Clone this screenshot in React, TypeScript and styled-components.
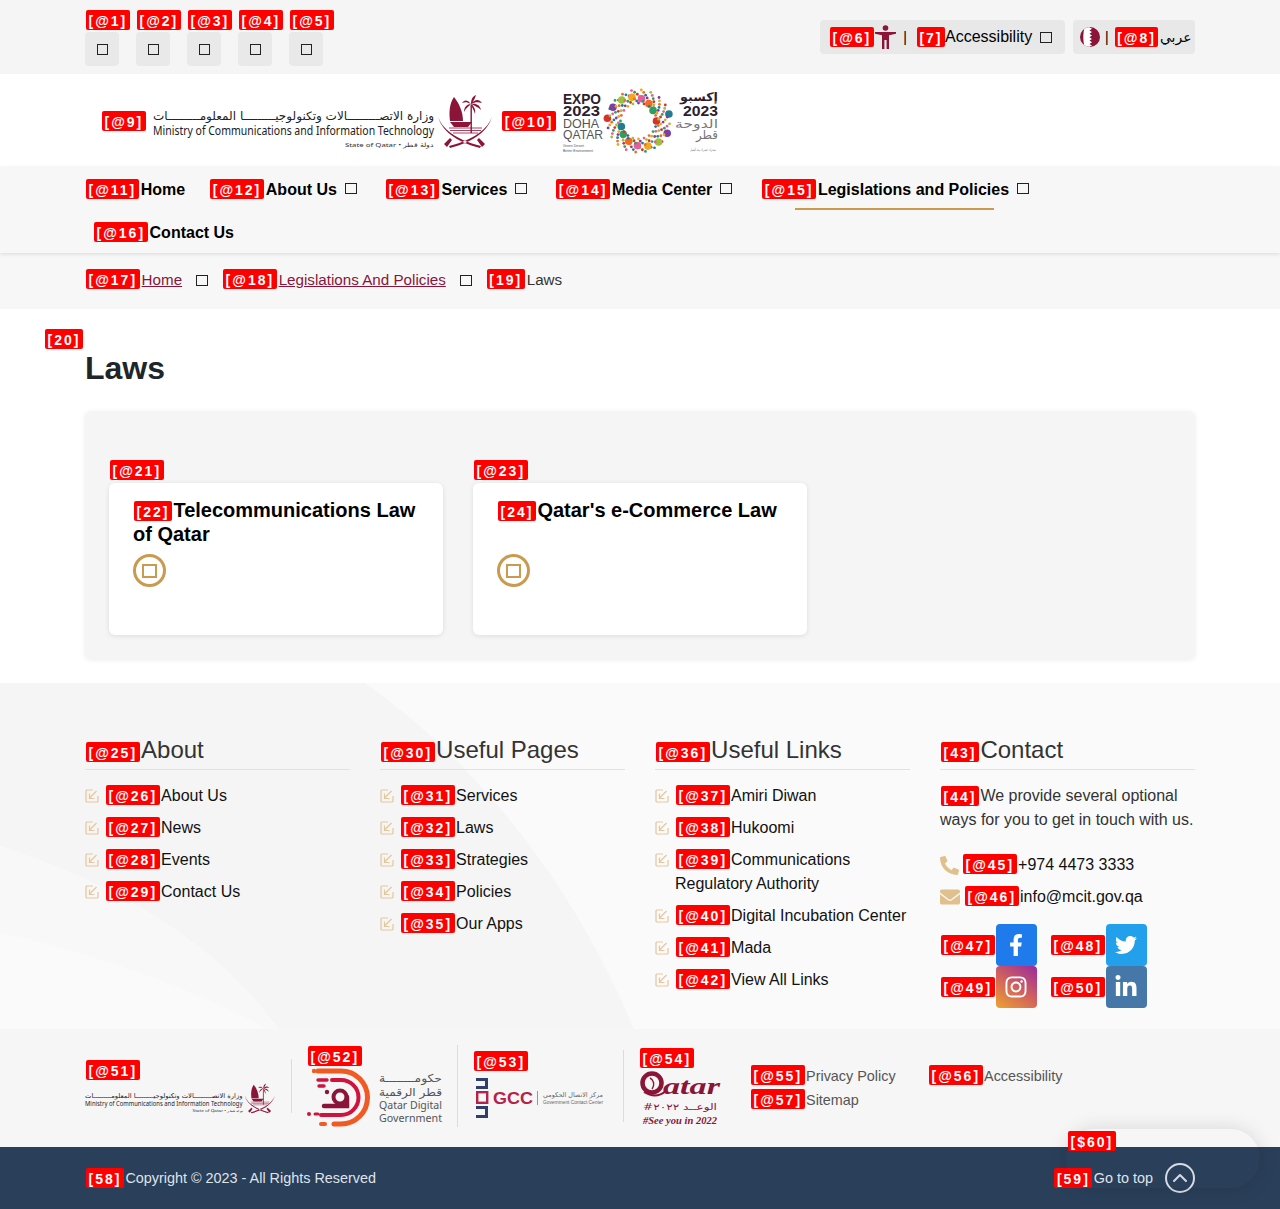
import React from "react";
import styled, { createGlobalStyle } from "styled-components";
import { FaFacebookF, FaTwitter, FaInstagram, FaLinkedinIn, FaPhoneAlt, FaEnvelope } from "react-icons/fa";
import { ChevronUp } from "lucide-react";

const Global = createGlobalStyle`
  html, body { margin: 0; padding: 0; background: #fff; }
  body { font-family: "Liberation Sans", Arial, sans-serif; font-size: 16px; color: #000; }
  * { box-sizing: border-box; }
  a { color: inherit; text-decoration: none; }
  ul { list-style: none; margin: 0; padding: 0; }
  h1, h2, h3, p { margin: 0; }
  #root { position: relative; width: 1280px; height: 1209px; overflow: hidden; }
`;

const MAROON = "#8a1538";
const GOLD = "#c99a4f";

const Badge = styled.span`
  display: inline-block;
  height: 20px;
  padding: 1px 2.5px 0;
  margin-right: 1.5px;
  background: #f00;
  border-radius: 2px;
  color: #fff;
  font: bold 14px/20px "Liberation Sans", Arial, sans-serif;
  letter-spacing: 2px;
  white-space: nowrap;
  flex: none;
`;

const Tofu = styled.span<{ $size?: number; $h?: number; $stroke?: number; $color?: string }>`
  display: inline-block;
  flex: none;
  align-self: center;
  width: ${(p) => p.$size ?? 12}px;
  height: ${(p) => p.$h ?? (p.$size ?? 12) - 1}px;
  border: ${(p) => p.$stroke ?? 1.5}px solid ${(p) => p.$color ?? "#222"};
`;

const TopBar = styled.div`
  height: 74px;
  padding: 0 85px;
  background: #f5f5f5;
  display: flex;
  justify-content: space-between;
`;
const ToolGroup = styled.div`
  display: flex;
  padding-top: 10px;
`;
const ToolCell = styled.div`
  width: 51px;
  display: flex;
  flex-direction: column;
  align-items: flex-start;
  gap: 2px;
  & > span:first-child { margin-left: 1px; }
`;
const ToolButton = styled.button`
  width: 34px;
  height: 34px;
  border: 0;
  border-radius: 4px;
  padding: 0;
  background: #e9e9e9;
  display: flex;
  align-items: center;
  justify-content: center;
`;
const PillGroup = styled.div`
  display: flex;
  gap: 8px;
  padding-top: 20px;
`;
const Pill = styled.div<{ $width: number; $pad: number }>`
  width: ${(p) => p.$width}px;
  height: 34px;
  padding-left: ${(p) => p.$pad}px;
  background: #e8e8e8;
  border-radius: 4px;
  display: flex;
  align-items: center;
  white-space: nowrap;
`;
const PipeSep = styled.span<{ $l: number; $r: number }>`
  margin: 0 ${(p) => p.$r}px 0 ${(p) => p.$l}px;
  font-size: 14px;
`;
const AccessLabel = styled.span`
  margin-left: -1.5px;
`;
const PillTofu = styled(Tofu)`
  margin-left: 8px;
`;
const ArabicLabel = styled.span`
  font-family: "DejaVu Sans", "Noto Sans", sans-serif;
  font-size: 14px;
`;

const LogoBar = styled.div`
  height: 93px;
  background: #fff;
  padding-left: 102px;
  display: flex;
  align-items: center;
  svg { overflow: visible; }
`;
const LogoGap = styled.div<{ $w: number }>`
  width: ${(p) => p.$w}px;
  flex: none;
`;

const NavBar = styled.nav`
  height: 86px;
  padding-left: 85px;
  background: #f7f7f7;
  box-shadow: 0 1px 4px rgba(0, 0, 0, 0.12);
  position: relative;
`;
const NavRow = styled.div<{ $indent?: number }>`
  height: 43px;
  padding-left: ${(p) => (p.$indent ?? 0) + 1}px;
  display: flex;
  align-items: center;
`;
const NavItem = styled.a<{ $after?: number; $active?: boolean }>`
  position: relative;
  margin-right: ${(p) => p.$after ?? 29}px;
  display: flex;
  align-items: baseline;
  font-weight: bold;
  white-space: nowrap;
  ${Badge} { margin-right: 2px; }
  ${Tofu} { margin-left: 8px; }
  ${(p) =>
    p.$active &&
    `&::after { content: ""; position: absolute; left: 33px; width: 199px; top: 29px; height: 2px; background: ${GOLD}; }`}
`;

const Crumbs = styled.div`
  height: 56px;
  padding: 0 0 5px 86px;
  background: #f7f7f7;
  display: flex;
  align-items: center;
`;
const CrumbTrail = styled.div`
  display: flex;
  align-items: baseline;
  font-size: 15.2px;
  ${Badge} { margin-right: 2px; }
`;
const CrumbLink = styled.a`
  color: ${MAROON};
  text-decoration: underline;
  display: inline-block;
`;
const CrumbSep = styled(Tofu)`
  margin: 3px 15px 0 14px;
`;
const CrumbCurrent = styled.span`
  color: #333;
`;

const Main = styled.main`
  padding: 20px 85px 24px;
`;
const TitleTag = styled.div`
  margin-left: -40px;
  height: 20px;
  ${Badge} { display: block; width: fit-content; }
`;
const PageTitle = styled.h1`
  font-size: 32px;
  line-height: 38px;
  font-weight: bold;
  color: #212529;
  margin-bottom: 24px;
`;
const Panel = styled.section`
  height: 248px;
  padding: 49px 24px 0;
  background: #f5f5f5;
  border-radius: 6px;
  box-shadow: 0 1px 5px rgba(0, 0, 0, 0.08);
  display: grid;
  grid-template-columns: repeat(3, 334px);
  gap: 30px;
  align-items: start;
`;
const CardWrap = styled.div`
  & > span:first-child { margin-left: 1px; display: block; width: fit-content; }
`;
const Card = styled.a`
  display: block;
  margin-top: 3px;
  height: 152px;
  padding: 15px 24px 0;
  background: #fff;
  border-radius: 6px;
  box-shadow: 0 1px 5px rgba(0, 0, 0, 0.1);
`;
const CardTitle = styled.h3`
  min-height: 48px;
  font-size: 20px;
  line-height: 24px;
  font-weight: bold;
  color: #000;
  ${Badge} { margin-left: 1px; }
`;
const CardCircle = styled.span`
  margin-top: 8px;
  width: 33px;
  height: 33px;
  border: 3px solid ${GOLD};
  border-radius: 50%;
  display: flex;
  align-items: center;
  justify-content: center;
`;

const Footer = styled.footer`
  position: relative;
  height: 346px;
  padding: 53px 85px 0;
  background: #fafafa;
  display: grid;
  grid-template-columns: 265px 245px 255px 255px;
  column-gap: 30px;
  align-items: start;
`;
const FooterArt = styled.svg`
  position: absolute;
  left: 0;
  top: 0;
`;
const FooterCol = styled.div`
  position: relative;
`;
const ColTitle = styled.h2`
  height: 34px;
  font-size: 24px;
  line-height: 27px;
  font-weight: normal;
  color: #333;
  border-bottom: 1px solid #e2e2e6;
  margin-bottom: 10px;
  ${Badge} { margin-left: 1px; }
`;
const LinkItem = styled.li`
  display: grid;
  grid-template-columns: 20px 1fr;
  padding: 4px 0;
  line-height: 24px;
  color: #111;
  ${Badge} { margin-left: 1px; }
`;
const TickIcon = styled.svg`
  margin-top: 5px;
`;
const ContactText = styled.p`
  line-height: 24px;
  color: #333;
  padding-top: 4px;
  margin-bottom: 17px;
  ${Badge} { margin-left: 1px; vertical-align: -1px; }
`;
const ContactRow = styled.div<{ $gap: number }>`
  height: 32px;
  display: flex;
  align-items: center;
  gap: ${(p) => p.$gap}px;
  color: #111;
  line-height: 24px;
  svg { color: #e0c08c; flex: none; }
`;
const SocialGrid = styled.div`
  margin-top: 11px;
  display: grid;
  grid-template-columns: 110px 110px;
`;
const SocialCell = styled.a`
  height: 42px;
  padding-left: 1px;
  display: flex;
  align-items: center;
  ${Badge} { margin-right: 1px; }
`;
const SocialTile = styled.span<{ $bg: string; $icon?: number }>`
  width: 41px;
  height: 42px;
  border-radius: 4px;
  background: ${(p) => p.$bg};
  color: #fff;
  display: flex;
  align-items: center;
  justify-content: center;
  font-size: ${(p) => p.$icon ?? 22}px;
`;

const PartnerBar = styled.div`
  height: 118px;
  padding: 0 0 4px 85px;
  background: #f6f6f6;
  display: flex;
  align-items: center;
`;
const PartnerCell = styled.div<{ $w: number; $gap?: number; $pb?: number; $last?: boolean }>`
  width: ${(p) => p.$w}px;
  flex: none;
  margin-right: 15px;
  padding: 1px 0 ${(p) => p.$pb ?? 0}px;
  border-right: ${(p) => (p.$last ? "0" : "1px solid #dcdcdc")};
  display: flex;
  flex-direction: column;
  align-items: flex-start;
  & > span:first-child { margin-left: 1px; margin-bottom: ${(p) => p.$gap ?? 3}px; }
  svg { display: block; overflow: visible; }
`;
const LegalLinks = styled.div`
  margin-top: 4px;
  display: grid;
  grid-template-columns: 178px 1fr;
  font-size: 14.4px;
  line-height: 24px;
  color: #555;
  a { height: 24px; }
`;

const CopyBar = styled.div`
  height: 62px;
  padding: 0 85px 1px 86px;
  background: #2a3f5a;
  color: #dfe4ea;
  font-size: 14.4px;
  display: flex;
  align-items: center;
  justify-content: space-between;
`;
const CopyText = styled.span`
  display: flex;
  align-items: center;
`;
const GoTop = styled.a`
  display: flex;
  align-items: center;
`;
const GoTopCircle = styled.span`
  margin-left: 12px;
  width: 30px;
  height: 30px;
  border: 2px solid #d5dbe5;
  border-radius: 50%;
  color: #d5dbe5;
  display: flex;
  align-items: center;
  justify-content: center;
`;
const FloatPill = styled.div`
  position: absolute;
  right: 20px;
  bottom: 21px;
  width: 194px;
  height: 59px;
  padding: 2px 0 0 2px;
  border-radius: 30px;
  box-shadow: 0 0 20px rgba(0, 0, 0, 0.13);
`;

const Tick = () => (
  <TickIcon width="14" height="14" viewBox="0 0 14 14" fill="none" stroke="#e3c79b" strokeWidth="1.2">
    <path d="M8 1H2a1 1 0 0 0-1 1v10a1 1 0 0 0 1 1h10a1 1 0 0 0 1-1V7" />
    <path d="M11.500 2 5 8.500M4.500 4.500v5h5" />
  </TickIcon>
);

const EmblemShapes = () => (
  <g fill={MAROON}>
    <path d="M16 3c-5 7-5 17-4 24h13C25 18 21 9 16 3z" />
    <path d="M12 28h22l-4 5H16z" />
    <path d="M32.500 11h1.400v28h-1.400z" />
    <path d="M33 10C29 5 26 6 24 9c3-1 5-1 9 1zm0 0c0-5 2-8 5-9-1 3-2 6-5 9zm0 0c4-5 8-5 11-1-4-1-7-1-11 1zm0 0c5-1 9 1 10 6-3-3-6-4-10-6zm0 0c-4 0-7 3-7 8 2-4 4-5 7-8zm0 0c3 2 5 6 4 10-1-4-3-6-4-10z" />
    <path d="M11 34h33M12 36.500h31M15 39h25" fill="none" stroke={MAROON} strokeWidth=".8" />
    <path d="M0 22c3 12 18 24 43 30l-1 2C18 48 3 36 0 22zM54 22c-3 12-18 24-43 30l1 2c24-6 39-18 42-32z" />
    <path d="M6 50l6-6 2 2-5 7zM47 50l-6-6-2 2 5 7z" />
  </g>
);

const MinistryLogo = ({ w }: { w: number }) => (
  <svg width={w} height={(w * 54) / 339} viewBox="0 0 339 54" style={{ flex: "none" }}>
    <text x="0" y="26" fontFamily="DejaVu Sans, Noto Sans" fontSize="11.500" fill="#222" textLength="281" lengthAdjust="spacingAndGlyphs">
      وزارة الاتصـــــــــالات وتكنولوجيـــــــــا المعلومـــــــــات
    </text>
    <text x="0" y="41" fontFamily="Noto Sans, Open Sans" fontSize="12" fill="#222" textLength="281" lengthAdjust="spacingAndGlyphs">
      Ministry of Communications and Information Technology
    </text>
    <text x="192" y="52.500" fontFamily="Noto Sans" fontSize="6" fill="#333" textLength="89" lengthAdjust="spacingAndGlyphs">
      State of Qatar • دولة قطر
    </text>
    <g transform="translate(285 0)">
      <EmblemShapes />
    </g>
  </svg>
);

const EXPO_COLORS = ["#d6322c", "#f0a81e", "#2f9e63", "#7a3fa0", "#e85d9a", "#1f7f8c", "#9dc13a", "#f26b21"];
const ExpoLogo = () => {
  const dots: React.ReactElement[] = [];
  for (let i = 0; i < 140; i++) {
    const a = (i / 140) * Math.PI * 2;
    const r = 18 + ((i * 3) % 7) * 2.2;
    const big = i % 9 === 0;
    dots.push(
      <circle
        key={i}
        cx={76.500 + Math.cos(a) * r}
        cy={34 + Math.sin(a) * r}
        r={big ? 3.800 : 1.400}
        fill={EXPO_COLORS[(i * 3) % EXPO_COLORS.length]}
      />
    );
  }
  return (
    <svg width="157" height="68" viewBox="0 0 157 68" style={{ flex: "none" }}>
      <g fontFamily="Liberation Sans" fill="#2d1e30">
        <text x="1" y="17" fontSize="14" fontWeight="bold" textLength="38" lengthAdjust="spacingAndGlyphs">EXPO</text>
        <text x="1" y="29" fontSize="14" fontWeight="bold" textLength="37" lengthAdjust="spacingAndGlyphs">2023</text>
        <text x="1" y="41" fontSize="13" fill="#555" textLength="36" lengthAdjust="spacingAndGlyphs">DOHA</text>
        <text x="1" y="52" fontSize="13" fill="#555" textLength="40" lengthAdjust="spacingAndGlyphs">QATAR</text>
        <text x="1" y="60" fontSize="3.500" fill="#555">Green Desert</text>
        <text x="1" y="65" fontSize="3.500" fill="#555">Better Environment</text>
      </g>
      {dots}
      <g fontFamily="DejaVu Sans" fill="#2d1e30">
        <text x="118" y="14" fontSize="12" fontWeight="bold" textLength="38" lengthAdjust="spacingAndGlyphs">إكسبو</text>
        <text x="121" y="29" fontSize="14" fontWeight="bold" fontFamily="Liberation Sans" textLength="35" lengthAdjust="spacingAndGlyphs">2023</text>
        <text x="113" y="41" fontSize="12" fill="#777" textLength="43" lengthAdjust="spacingAndGlyphs">الدوحة</text>
        <text x="134" y="52" fontSize="12" fill="#777" textLength="22" lengthAdjust="spacingAndGlyphs">قطر</text>
        <text x="128" y="64" fontSize="3.500" fill="#777" textLength="26" lengthAdjust="spacingAndGlyphs">صحراء خضراء بيئة أفضل</text>
      </g>
    </svg>
  );
};

const DigitalGovLogo = () => (
  <svg width="136" height="59" viewBox="0 0 136 59">
    <path d="M11 3H34a26.500 26.500 0 0 1 0 53H27" fill="none" stroke="#f15a22" strokeWidth="5" strokeLinecap="round" />
    <path d="M25 12H34a17.500 17.500 0 0 1 0 35H14" fill="none" stroke="#d0123f" strokeWidth="4" strokeLinecap="round" />
    <circle cx="33" cy="29" r="6.500" fill="none" stroke={MAROON} strokeWidth="4" />
    <path d="M17 38H40V29" fill="none" stroke={MAROON} strokeWidth="4.500" strokeLinecap="round" />
    <circle cx="7" cy="3" r="2.200" fill="#f15a22" />
    <path d="M11 12h9M12 18h5" stroke="#d0123f" strokeWidth="3.400" strokeLinecap="round" />
    <circle cx="20" cy="24" r="2.200" fill={MAROON} />
    <circle cx="2" cy="46" r="2" fill="#d0123f" />
    <path d="M8 46h3" stroke="#d0123f" strokeWidth="3" strokeLinecap="round" />
    <path d="M14 56h4" stroke="#f15a22" strokeWidth="4" strokeLinecap="round" />
    <g fontFamily="DejaVu Sans" fill="#555">
      <text x="72" y="14" fontSize="11" textLength="63" lengthAdjust="spacingAndGlyphs">حكومــــــــة</text>
      <text x="72" y="28" fontSize="11" textLength="63" lengthAdjust="spacingAndGlyphs">قطر الرقمية</text>
    </g>
    <g fontFamily="Noto Sans" fill="#555">
      <text x="72" y="41" fontSize="11" textLength="63" lengthAdjust="spacingAndGlyphs">Qatar Digital</text>
      <text x="72" y="54" fontSize="11" textLength="63" lengthAdjust="spacingAndGlyphs">Government</text>
    </g>
  </svg>
);

const DgccLogo = () => (
  <svg width="132" height="42" viewBox="0 0 132 42">
    <g transform="translate(2 0)">
      <path d="M1 1h12v11H1V9h9V4H1z" fill="#2f3f6b" />
      <rect x="2.200" y="15.200" width="10" height="10.600" fill="none" stroke="#b3234a" strokeWidth="2.400" />
      <path d="M1 29h12v12H1v-3h9v-6H1z" fill="#2f3f6b" />
      <text x="18" y="27" fontFamily="Liberation Sans" fontSize="16" fontWeight="bold" fill="#b3234a" textLength="40" lengthAdjust="spacingAndGlyphs">GCC</text>
      <rect x="62" y="14" width="1" height="14" fill="#999" />
      <text x="68" y="20" fontFamily="DejaVu Sans" fontSize="6.500" fill="#666" textLength="60" lengthAdjust="spacingAndGlyphs">مركز الاتصال الحكومي</text>
      <text x="68" y="27" fontFamily="Liberation Sans" fontSize="4.600" fill="#666" textLength="60" lengthAdjust="spacingAndGlyphs">Government Contact Center</text>
    </g>
  </svg>
);

const QatarLogo = () => (
  <svg width="81" height="55" viewBox="0 0 81 55">
    <circle cx="13" cy="12" r="9.500" fill="none" stroke={MAROON} strokeWidth="4.500" />
    <path d="M11 7c4 2 5 7 2 11" fill="none" stroke={MAROON} strokeWidth="1.400" />
    <path d="M5 21c8 5 16 4 22-1" fill="none" stroke={MAROON} strokeWidth="2" />
    <text x="24" y="23" fontFamily="Liberation Serif" fontStyle="italic" fontWeight="bold" fontSize="23" fill={MAROON} textLength="57" lengthAdjust="spacingAndGlyphs">atar</text>
    <text x="4" y="39" fontFamily="DejaVu Sans" fontSize="9" fill={MAROON} textLength="74" lengthAdjust="spacingAndGlyphs">#الوعــد ٢٠٢٢</text>
    <text x="4" y="53" fontFamily="Liberation Serif" fontStyle="italic" fontWeight="bold" fontSize="9.500" fill={MAROON} textLength="74" lengthAdjust="spacingAndGlyphs">#See you in 2022</text>
  </svg>
);

const PersonIcon = () => (
  <svg width="21" height="24" viewBox="0 0 21 24" fill={MAROON} style={{ flex: "none" }}>
    <circle cx="10.500" cy="3" r="2.800" />
    <path d="M0 7h21v1.800l-7 1.400V24h-2.400v-9h-2.200v9H7V10.200L0 8.800z" />
  </svg>
);

const FlagIcon = () => (
  <svg width="20" height="20" viewBox="0 0 20 20" style={{ flex: "none" }}>
    <defs>
      <clipPath id="flag-disc"><circle cx="10" cy="10" r="10" /></clipPath>
    </defs>
    <circle cx="10" cy="10" r="10" fill={MAROON} />
    <path d="M5 0H9L12 1.700 9.500 3.400 12 5.100 9.500 6.800 12 8.500 9.500 10.200 12 11.900 9.500 13.600 12 15.300 9.500 17 12 18.500 9 20H5C2.800 16 2.800 4 5 0Z" fill="#fff" clipPath="url(#flag-disc)" />
  </svg>
);

const Art = () => (
  <FooterArt width="1280" height="346" viewBox="0 0 1280 346" aria-hidden="true">
    <path d="M0 0H365C450 60 560 170 634 346H0Z" fill="#f5f5f5" />
    <path d="M0 163C100 195 210 250 279 346H0Z" fill="#f8f8f8" />
    <path d="M0 250C100 270 200 310 268 346H0Z" fill="#fafafa" />
  </FooterArt>
);

type L = { b: string; t: string };
const ListCol = ({ b, title, items }: { b: string; title: string; items: L[] }) => (
  <FooterCol>
    <ColTitle><Badge>{b}</Badge>{title}</ColTitle>
    <ul>
      {items.map((i) => (
        <LinkItem key={i.b}>
          <Tick />
          <a><Badge>{i.b}</Badge>{i.t}</a>
        </LinkItem>
      ))}
    </ul>
  </FooterCol>
);

export default function App() {
  return (
    <>
      <Global />
      <TopBar>
        <ToolGroup>
          {["[@1]", "[@2]", "[@3]", "[@4]", "[@5]"].map((b) => (
            <ToolCell key={b}>
              <Badge>{b}</Badge>
              <ToolButton><Tofu $size={11} $h={11} /></ToolButton>
            </ToolCell>
          ))}
        </ToolGroup>
        <PillGroup>
          <Pill $width={245} $pad={10}>
            <Badge>[@6]</Badge>
            <PersonIcon />
            <PipeSep $l={7} $r={10}>|</PipeSep>
            <Badge>[7]</Badge>
            <AccessLabel>Accessibility</AccessLabel>
            <PillTofu />
          </Pill>
          <Pill $width={122} $pad={7}>
            <FlagIcon />
            <PipeSep $l={5} $r={6}>|</PipeSep>
            <Badge>[@8]</Badge>
            <ArabicLabel>عربي</ArabicLabel>
          </Pill>
        </PillGroup>
      </TopBar>

      <LogoBar>
        <Badge>[@9]</Badge>
        <LogoGap $w={5.500} />
        <MinistryLogo w={339} />
        <LogoGap $w={10.500} />
        <Badge>[@10]</Badge>
        <LogoGap $w={4.500} />
        <ExpoLogo />
      </LogoBar>

      <NavBar>
        <NavRow>
          <NavItem $after={25}><Badge>[@11]</Badge>Home</NavItem>
          <NavItem><Badge>[@12]</Badge>About Us<Tofu /></NavItem>
          <NavItem><Badge>[@13]</Badge>Services<Tofu /></NavItem>
          <NavItem $after={30}><Badge>[@14]</Badge>Media Center<Tofu /></NavItem>
          <NavItem $active><Badge>[@15]</Badge>Legislations and Policies<Tofu /></NavItem>
        </NavRow>
        <NavRow $indent={8}>
          <NavItem><Badge>[@16]</Badge>Contact Us</NavItem>
        </NavRow>
      </NavBar>

      <Crumbs>
        <CrumbTrail>
          <Badge>[@17]</Badge><CrumbLink>Home</CrumbLink>
          <CrumbSep />
          <Badge>[@18]</Badge><CrumbLink>Legislations And Policies</CrumbLink>
          <CrumbSep />
          <Badge>[19]</Badge><CrumbCurrent>Laws</CrumbCurrent>
        </CrumbTrail>
      </Crumbs>

      <Main>
        <TitleTag><Badge>[20]</Badge></TitleTag>
        <PageTitle>Laws</PageTitle>
        <Panel>
          <CardWrap>
            <Badge>[@21]</Badge>
            <Card>
              <CardTitle><Badge>[22]</Badge>Telecommunications Law of Qatar</CardTitle>
              <CardCircle><Tofu $size={15} $stroke={2} $color={GOLD} /></CardCircle>
            </Card>
          </CardWrap>
          <CardWrap>
            <Badge>[@23]</Badge>
            <Card>
              <CardTitle><Badge>[24]</Badge>Qatar's e-Commerce Law</CardTitle>
              <CardCircle><Tofu $size={15} $stroke={2} $color={GOLD} /></CardCircle>
            </Card>
          </CardWrap>
        </Panel>
      </Main>

      <Footer>
        <Art />
        <ListCol b="[@25]" title="About" items={[
          { b: "[@26]", t: "About Us" }, { b: "[@27]", t: "News" }, { b: "[@28]", t: "Events" }, { b: "[@29]", t: "Contact Us" },
        ]} />
        <ListCol b="[@30]" title="Useful Pages" items={[
          { b: "[@31]", t: "Services" }, { b: "[@32]", t: "Laws" }, { b: "[@33]", t: "Strategies" }, { b: "[@34]", t: "Policies" }, { b: "[@35]", t: "Our Apps" },
        ]} />
        <ListCol b="[@36]" title="Useful Links" items={[
          { b: "[@37]", t: "Amiri Diwan" }, { b: "[@38]", t: "Hukoomi" }, { b: "[@39]", t: "Communications Regulatory Authority" },
          { b: "[@40]", t: "Digital Incubation Center" }, { b: "[@41]", t: "Mada" }, { b: "[@42]", t: "View All Links" },
        ]} />
        <FooterCol>
          <ColTitle><Badge>[43]</Badge>Contact</ColTitle>
          <ContactText><Badge>[44]</Badge>We provide several optional ways for you to get in touch with us.</ContactText>
          <ContactRow $gap={4}><FaPhoneAlt size={19} /><a><Badge>[@45]</Badge>+974 4473 3333</a></ContactRow>
          <ContactRow $gap={5}><FaEnvelope size={20} /><a><Badge>[@46]</Badge>info@mcit.gov.qa</a></ContactRow>
          <SocialGrid>
            <SocialCell><Badge>[@47]</Badge><SocialTile $bg="#1f7bec"><FaFacebookF /></SocialTile></SocialCell>
            <SocialCell><Badge>[@48]</Badge><SocialTile $bg="#22a0ec"><FaTwitter /></SocialTile></SocialCell>
            <SocialCell><Badge>[@49]</Badge><SocialTile $bg="linear-gradient(35deg,#eda22f 0%,#d0605f 50%,#9a2a9c 100%)" $icon={24}><FaInstagram /></SocialTile></SocialCell>
            <SocialCell><Badge>[@50]</Badge><SocialTile $bg="#4577a8" $icon={24}><FaLinkedinIn /></SocialTile></SocialCell>
          </SocialGrid>
        </FooterCol>
      </Footer>

      <PartnerBar>
        <PartnerCell $w={207}><Badge>[@51]</Badge><MinistryLogo w={190} /></PartnerCell>
        <PartnerCell $w={151} $gap={2}><Badge>[@52]</Badge><DigitalGovLogo /></PartnerCell>
        <PartnerCell $w={151} $gap={6} $pb={3}><Badge>[@53]</Badge><DgccLogo /></PartnerCell>
        <PartnerCell $w={97} $last><Badge>[@54]</Badge><QatarLogo /></PartnerCell>
        <LegalLinks>
          <a><Badge>[@55]</Badge>Privacy Policy</a>
          <a><Badge>[@56]</Badge>Accessibility</a>
          <a><Badge>[@57]</Badge>Sitemap</a>
        </LegalLinks>
      </PartnerBar>

      <CopyBar>
        <CopyText><Badge>[58]</Badge>Copyright © 2023 - All Rights Reserved</CopyText>
        <GoTop>
          <Badge>[59]</Badge>Go to top
          <GoTopCircle><ChevronUp size={24} strokeWidth={2} /></GoTopCircle>
        </GoTop>
      </CopyBar>
      <FloatPill><Badge>[$60]</Badge></FloatPill>
    </>
  );
}
